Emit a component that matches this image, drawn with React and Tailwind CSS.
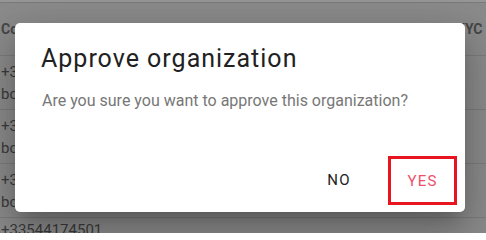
import React from "react";

const font = { fontFamily: "Roboto, 'Noto Sans', Arial, sans-serif" };

function Row({ a, b }) {
  return (
    <div className="h-[54px] border-b border-[#7c7c7c] flex flex-col justify-center text-[15px] leading-[22px] text-[#3b3b3b] pl-[1px]">
      <div>{a}</div>
      <div>{b}</div>
    </div>
  );
}

export default function App() {
  return (
    <div className="relative w-[486px] h-[233px] overflow-hidden bg-[#8b8b8b]" style={font}>
      {/* background table (dimmed) */}
      <div className="flex flex-col">
        <div className="h-[3px] bg-[#979797] border-b border-[#7a7a7a]" />
        <div className="h-[53px] border-b border-[#7c7c7c] flex items-center text-[14px] font-bold text-[#474747] whitespace-nowrap">
          <div className="w-[456px] shrink-0 pl-[1px]">Contact</div>
          <div className="shrink-0">KYC status</div>
        </div>
        <Row a="+33544174501" b="bconnor@mail.com" />
        <Row a="+33544174501" b="bconnor@mail.com" />
        <Row a="+33544174501" b="bconnor@mail.com" />
        <div className="pt-[4px] leading-[16px] text-[15px] text-[#3b3b3b] pl-[1px]">+33544174501</div>
      </div>

      {/* dialog overlay */}
      <div className="absolute inset-0 flex items-center justify-center">
        <div className="w-[450px] h-[189px] -ml-[6px] mt-[2px] bg-white rounded-[5px] flex flex-col shadow-[0px_11px_15px_-7px_rgba(0,0,0,0.2),0px_24px_38px_3px_rgba(0,0,0,0.14),0px_9px_46px_8px_rgba(0,0,0,0.12)]">
          <div className="pt-[20px] pl-[26px] text-[25px] leading-[32px] font-normal tracking-[0.04em] text-[#212121] whitespace-nowrap">
            Approve organization
          </div>
          <div className="mt-[14px] pl-[27px] text-[16px] leading-[24px] text-[#777777]">
            Are you sure you want to approve this organization?
          </div>
          <div className="mt-auto mb-[7px] mr-[8px] flex justify-end items-center">
            <div className="w-[64px] h-[36px] flex items-center justify-center text-[15px] font-normal tracking-[0.08em] text-[#222222]">
              NO
            </div>
            <div className="ml-[17px] w-[69px] h-[49px] border-[3px] border-[#e8141f] flex items-center justify-center pt-[2px] text-[15px] font-normal tracking-[0.08em] text-[#ef4f6b]">
              YES
            </div>
          </div>
        </div>
      </div>
    </div>
  );
}
